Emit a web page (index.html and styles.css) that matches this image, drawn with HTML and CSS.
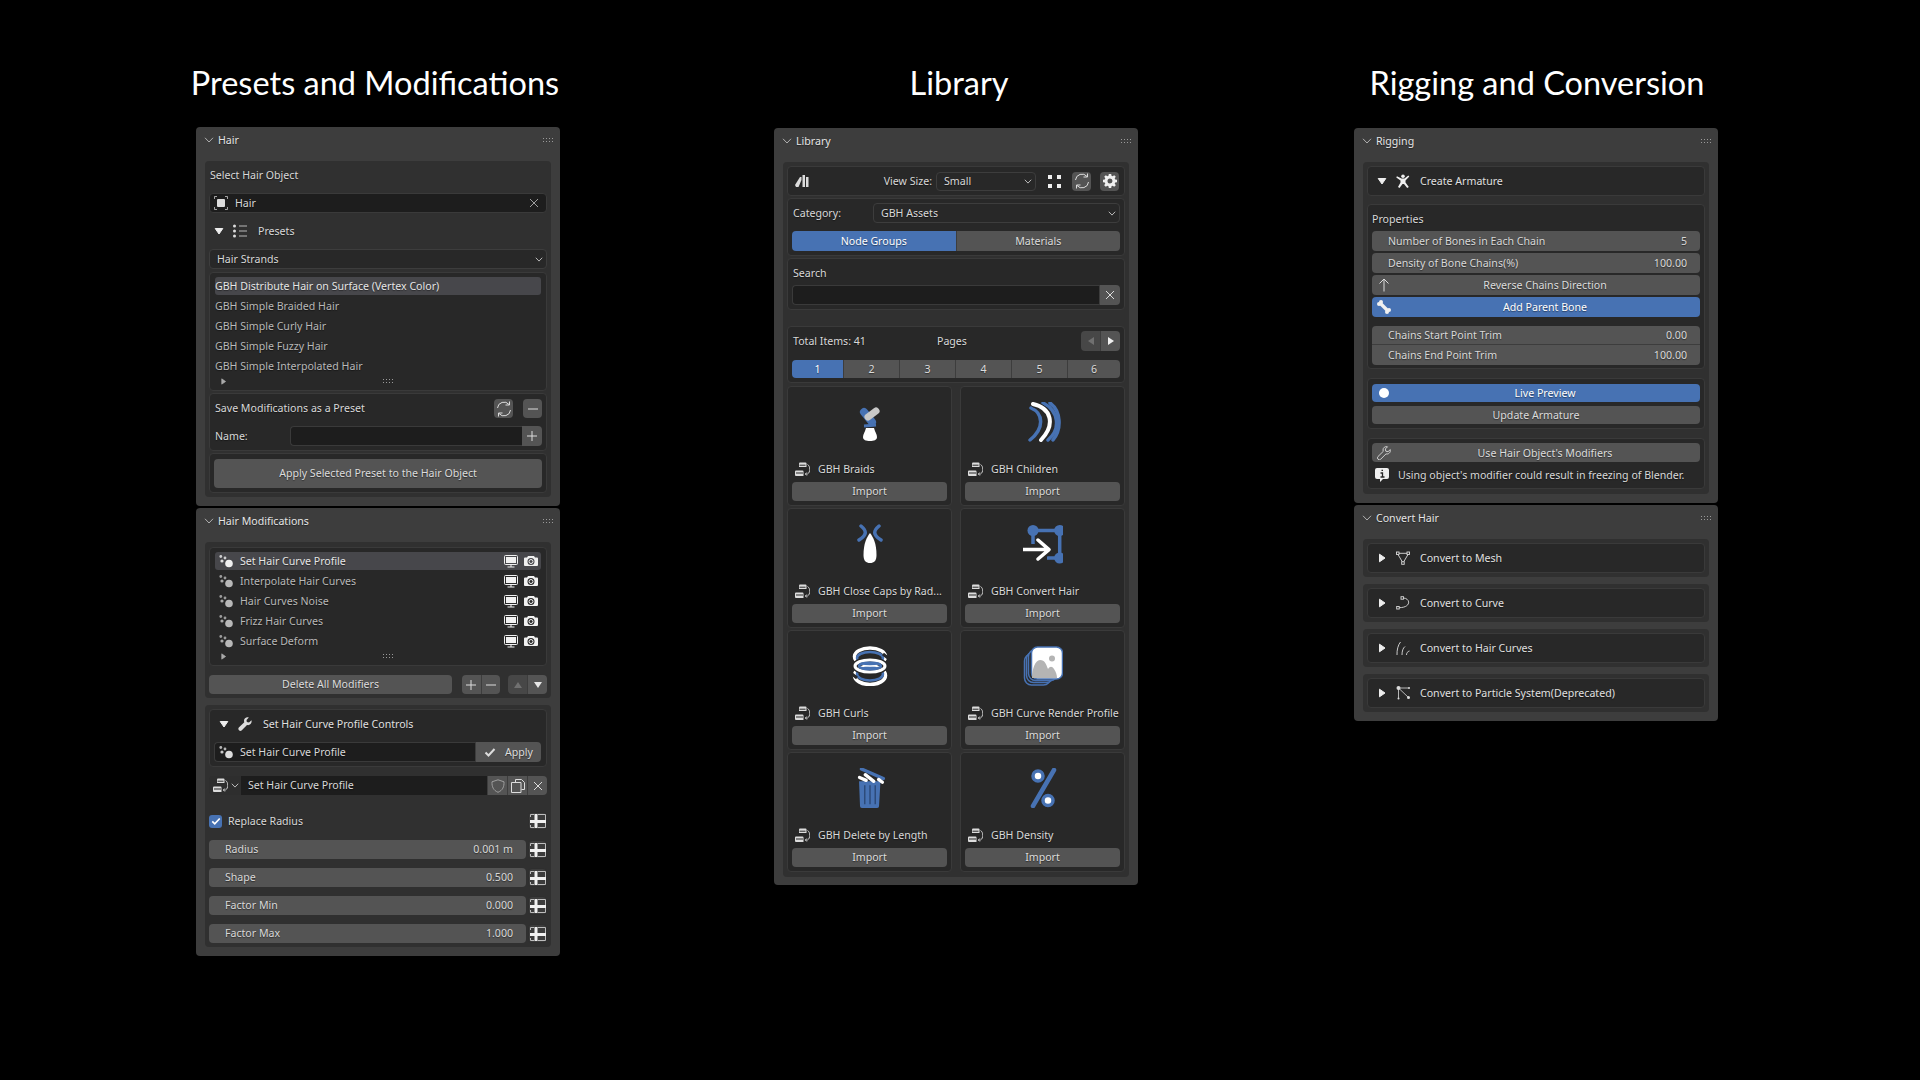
FILE: index.html
```html
<!DOCTYPE html>
<html lang="en">
<head>
	<meta charset="utf-8">
	<title>Hair add-on panels</title>
	<link rel="stylesheet" href="styles.css">
</head>
<body>

<svg class="defs" xmlns="http://www.w3.org/2000/svg">
	<symbol id="chev" viewBox="0 0 10 6"><path d="M1 .8 5 5 9 .8" fill="none" stroke="currentColor"/></symbol>
	<symbol id="tri-down" viewBox="0 0 10 10"><path d="M1.2 2.5h7.6L5 8z" fill="currentColor" stroke="currentColor" stroke-linejoin="round"/></symbol>
	<symbol id="tri-right" viewBox="0 0 10 10"><path d="M2.5 1.2v7.6L8 5z" fill="currentColor" stroke="currentColor" stroke-linejoin="round"/></symbol>
	<symbol id="grip" viewBox="0 0 11 5"><g fill="currentColor"><rect x="0" y="0" width="1" height="1"/><rect x="3" y="0" width="1" height="1"/><rect x="6" y="0" width="1" height="1"/><rect x="9" y="0" width="1" height="1"/><rect x="0" y="3" width="1" height="1"/><rect x="3" y="3" width="1" height="1"/><rect x="6" y="3" width="1" height="1"/><rect x="9" y="3" width="1" height="1"/></g></symbol>
	<symbol id="close" viewBox="0 0 10 10"><path d="M1 1l8 8M9 1 1 9" fill="none" stroke="currentColor"/></symbol>
	<symbol id="object" viewBox="0 0 14 14"><path d="M.5 3V.5H3M11 .5h2.500V3M13.500 11v2.500H11M3 13.500H.5V11" fill="none" stroke="currentColor" opacity=".7"/><rect x="3" y="3" width="8" height="8" rx="1" fill="currentColor"/></symbol>
	<symbol id="list" viewBox="0 0 14 14"><g fill="currentColor"><circle cx="1.500" cy="2" r="1.500"/><circle cx="1.500" cy="7" r="1.500"/><circle cx="1.500" cy="12" r="1.500"/></g><path d="M6 2h8M6 7h8M6 12h8" stroke="currentColor" stroke-width=".8"/></symbol>
	<symbol id="refresh" viewBox="0 0 16 16"><g fill="none" stroke="currentColor"><path d="M1.500 7A6.500 6.500 0 0 1 13 3.500"/><path d="M14.500 9A6.500 6.500 0 0 1 3 12.500"/><path d="M9.500 4H13.500V.5"/><path d="M6.500 12H2.500V15.500"/></g></symbol>
	<symbol id="minus" viewBox="0 0 10 10"><path d="M0 5h10" stroke="currentColor"/></symbol>
	<symbol id="plus" viewBox="0 0 10 10"><path d="M0 5h10M5 0v10" stroke="currentColor"/></symbol>
	<symbol id="mod" viewBox="0 0 14 14"><g fill="currentColor"><circle cx="1.800" cy="2.500" r="1.400" opacity=".8"/><circle cx="6" cy="4" r="1.400" opacity=".8"/><circle cx="3" cy="7" r="1.600" opacity=".9"/><circle cx="10" cy="9.500" r="3.800"/></g></symbol>
	<symbol id="monitor" viewBox="0 0 14 14"><path d="M1.500 1.500h11a1 1 0 0 1 1 1v7a1 1 0 0 1-1 1h-11a1 1 0 0 1-1-1v-7a1 1 0 0 1 1-1z" fill="none" stroke="currentColor"/><rect x="2" y="3" width="10" height="6" fill="currentColor"/><path d="M7 11v2M3.500 13h7" stroke="currentColor"/></symbol>
	<symbol id="camera" viewBox="0 0 14 14"><path fill="currentColor" fill-rule="evenodd" d="M4 2h6l1 1.500h2a1 1 0 0 1 1 1V11a1 1 0 0 1-1 1H1a1 1 0 0 1-1-1V4.500a1 1 0 0 1 1-1h2zM7 4a3.500 3.500 0 1 0 0 7 3.500 3.500 0 0 0 0-7z"/><circle cx="7" cy="7.500" r="2" fill="none" stroke="currentColor"/></symbol>
	<symbol id="wrench" viewBox="0 0 14 14"><path fill="currentColor" d="M13.500 3.200 11 5.500 8.800 5.100 8.500 3 10.800.5C8.500-.3 6 1.300 6 3.800c0 .6.100 1 .3 1.500L.8 10.600a2 2 0 0 0 2.800 2.800L9 8c2.700.8 5.300-1.700 4.500-4.800z"/></symbol>
	<symbol id="wrench-line" viewBox="0 0 14 14"><path fill="none" stroke="currentColor" stroke-width=".9" d="M13.300 3.600 11 5.700 8.800 5.200 8.300 3 10.500.8C8.300 0 5.800 1.700 6 4.100c0 .4.100.8.300 1.200L1 10.500a1.900 1.900 0 0 0 2.700 2.700L9 7.900c2.600.7 4.900-1.600 4.300-4.300z"/></symbol>
	<symbol id="nodes" viewBox="0 0 15 15"><g fill="currentColor"><path d="M5 .5h5.500a1 1 0 0 1 1 1v3.500H4V1.500a1 1 0 0 1 1-1z" /><path d="M1 8.500h6.500a1 1 0 0 1 1 1V14H1a1 1 0 0 1-1-1V9.500a1 1 0 0 1 1-1z"/></g><path d="M4.500 3.200h6M1 11h7" stroke="#282828" stroke-width="1"/><path d="M12.500 2.500c3 1.500 3 8 0 9.500H10.500M11.800 10.500 10.300 12l1.500 1.500" fill="none" stroke="currentColor" stroke-width=".9"/></symbol>
	<symbol id="shield" viewBox="0 0 14 14"><path d="M7 .8 13 2.800c.2 5-1.300 8.500-6 10.500C2.300 11.300.8 7.800 1 2.800z" fill="none" stroke="currentColor"/></symbol>
	<symbol id="copy" viewBox="0 0 14 14"><path d="M4.500 3.500V.5h6l3 3v7h-3M.5 3.500h9.500v10H.5z" fill="none" stroke="currentColor"/></symbol>
	<symbol id="deco" viewBox="0 0 16 16"><path d="M.5 4V1.500H4M8 1.500h7.500V14.500H8M4 14.500H.5V12" fill="none" stroke="#bdbdbd"/><g fill="currentColor"><rect x="4.500" y="1" width="3" height="14"/><rect x="0" y="7" width="16" height="3"/></g></symbol>
	<symbol id="check" viewBox="0 0 12 12"><path d="M1.500 6.500 4.500 9.500 10.500 3" fill="none" stroke="currentColor" stroke-width="2"/></symbol>
	<symbol id="logo" viewBox="0 0 14 14"><g fill="currentColor"><path d="M0 11 5 3h1.500v3L3.500 13H1z"/><rect x="7.500" y="1" width="2.500" height="12"/><rect x="11" y="3" width="2.500" height="10"/></g></symbol>
	<symbol id="dots4" viewBox="0 0 13 13"><g fill="currentColor"><rect width="4" height="4"/><rect x="9" width="4" height="4"/><rect y="9" width="4" height="4"/><rect x="9" y="9" width="4" height="4"/></g></symbol>
	<symbol id="gear" viewBox="0 0 14 14"><path fill="currentColor" fill-rule="evenodd" d="M5.800 0h2.400l.3 1.800 1.100.5L11.200 1.200 12.800 2.800 11.700 4.300l.5 1.200L14 5.800v2.400l-1.800.3-.5 1.100 1.100 1.600-1.600 1.600-1.600-1.100-1.100.5L8.200 14H5.800l-.3-1.800-1.100-.5-1.600 1.100-1.600-1.600 1.100-1.600-.5-1.100L0 8.200V5.800l1.800-.3.5-1.200-1.100-1.500 1.600-1.600 1.600 1.100 1.100-.5zM7 4.500a2.500 2.500 0 1 0 0 5 2.500 2.500 0 0 0 0-5z"/></symbol>
	<symbol id="person" viewBox="0 0 14 14"><g fill="currentColor"><circle cx="7" cy="2.200" r="1.800"/><path d="M.3 3.500.9 2.200 5.500 4.400h3l3.800-3L13.300 2.500 9.500 6.500 9.500 8.500 12.800 13 11.200 14 8 10H6.500L3.500 14 2 13l2.500-4.500V6.500z"/></g></symbol>
	<symbol id="arrow-up" viewBox="0 0 12 14"><path d="M6 13.500V1M1.500 5.500 6 1l4.500 4.500" fill="none" stroke="currentColor"/></symbol>
	<symbol id="bone" viewBox="0 0 14 14"><path d="M3 3 11 11" stroke="currentColor" stroke-width="3.400"/><g fill="currentColor"><circle cx="2" cy="4" r="2"/><circle cx="4" cy="2" r="2"/><circle cx="10" cy="12" r="2"/><circle cx="12" cy="10" r="2"/></g></symbol>
	<symbol id="info" viewBox="0 0 14 14"><path fill="currentColor" d="M2 0h10a2 2 0 0 1 2 2v7a2 2 0 0 1-2 2H8l-3 3v-3H2a2 2 0 0 1-2-2V2a2 2 0 0 1 2-2z"/><path d="M5.500 5H7.500V8.500M5.500 9H9.500M6.500 2.300h1.500" fill="none" stroke="#282828" stroke-width="1.300"/></symbol>
	<symbol id="mesh" viewBox="0 0 14 14"><g fill="none" stroke="currentColor" stroke-width=".9"><rect x=".5" y="1" width="2.500" height="2.500"/><rect x="11" y="1" width="2.500" height="2.500"/><rect x="5.700" y="10.800" width="2.500" height="2.500"/><path d="M3 2.300h8M2 3.500 6.300 10.800M12 3.500 7.700 10.800"/></g></symbol>
	<symbol id="curve" viewBox="0 0 14 14"><g fill="none" stroke="currentColor" stroke-width=".9"><rect x="5" y=".7" width="2.500" height="2.500"/><rect x=".7" y="10.500" width="2.500" height="2.500"/><path d="M7.500 2c7 .5 8 9.500-4.300 9.700"/></g></symbol>
	<symbol id="hair" viewBox="0 0 14 14"><path d="M1 14C.8 9 2 4 4.500 1M6 14c0-4 1-7 3-8.500M10.500 14c0-2 1-3.500 3-4" fill="none" stroke="currentColor" stroke-width=".9"/></symbol>
	<symbol id="particle" viewBox="0 0 14 14"><g fill="currentColor"><circle cx="2.500" cy="2" r="2"/><circle cx="13" cy="2" r="1"/><circle cx="12.500" cy="11.500" r="1.500"/><circle cx="2.500" cy="12.500" r="1"/></g><path d="M2.500 2h10M2.500 2l10 9.500M2.500 2v10" stroke="currentColor" stroke-width=".8"/></symbol>

	<symbol id="big-braids" viewBox="0 0 40 40"><path d="M14 10l8 10" stroke="#4772b3" stroke-width="8" stroke-linecap="round"/><path d="M14 24l12-1" stroke="#4772b3" stroke-width="3"/><path d="M18 15 26 9" stroke="#c8c8c8" stroke-width="7" stroke-linecap="round"/><path d="M16 26h8c1 4 3 6 3 9 0 3-3 4-7 4s-7-1-7-4c0-3 2-5 3-9z" fill="#fff"/></symbol>
	<symbol id="big-children" viewBox="0 0 40 40"><g fill="none" stroke="#4772b3" stroke-width="3.500" stroke-linecap="round"><path d="M8 6c12 5 14 20-1 32"/><path d="M20 1c16 8 18 26 5 37"/><path d="M27 1c11 8 12 26 3 37"/></g><path d="M10 2c18 4 23 20 8 36" fill="none" stroke="#282828" stroke-width="6"/><path d="M10 2c18 4 23 20 8 36" fill="none" stroke="#fff" stroke-width="4" stroke-linecap="round"/></symbol>
	<symbol id="big-caps" viewBox="0 0 40 40"><path d="M20 9c3 4 6.500 10 6.500 22 0 6-2.500 8-6.500 8s-6.500-2-6.500-8C13.500 19 17 13 20 9z" fill="#fff"/><path d="M11 2c6 5 6 9-2 14M29 2c-6 5-6 9 2 14" fill="none" stroke="#4772b3" stroke-width="3.500" stroke-linecap="round"/></symbol>
	<symbol id="big-convert" viewBox="0 0 40 40"><path d="M10 20V6.500h26.700V34H24" fill="none" stroke="#4772b3" stroke-width="3.500"/><g fill="#4772b3"><circle cx="10" cy="6.500" r="5.500"/><circle cx="36.700" cy="6.500" r="5.500"/><circle cx="36.700" cy="34" r="5.500"/></g><path d="M-1 25.600H25M15 16l11 9.600L15 35" fill="none" stroke="#282828" stroke-width="8"/><path d="M-1 25.600H25M15 16l11 9.600L15 35" fill="none" stroke="#fff" stroke-width="3.500" stroke-linecap="round" stroke-linejoin="round"/></symbol>
	<symbol id="big-curls" viewBox="0 0 40 40"><g fill="none"><ellipse cx="20" cy="29.500" rx="15.500" ry="9" stroke="#fff" stroke-width="3.500"/><ellipse cx="20" cy="28" rx="13" ry="6.500" stroke="#4772b3" stroke-width="2.500"/><ellipse cx="20" cy="10.500" rx="15.500" ry="8.500" stroke="#fff" stroke-width="3.500"/><ellipse cx="20" cy="12" rx="13" ry="6" stroke="#4772b3" stroke-width="2.500"/><ellipse cx="20" cy="20" rx="15.500" ry="6.500" stroke="#282828" stroke-width="5"/><ellipse cx="20" cy="20" rx="15" ry="6" stroke="#fff" stroke-width="3"/><ellipse cx="20" cy="20" rx="11" ry="3.200" stroke="#4772b3" stroke-width="2.500"/></g><path d="M33 8l5 4M2 28l5 4" stroke="#282828" stroke-width="3"/></symbol>
	<symbol id="big-profile" viewBox="0 0 40 40"><g fill="#282828" stroke="#4772b3" stroke-width="1.500"><rect x="1.500" y="8" width="26" height="31" rx="7"/><rect x="3.500" y="6" width="27" height="30.500" rx="7"/><rect x="5.500" y="3.500" width="29" height="31" rx="7"/></g><rect x="8.500" y="1" width="31" height="32" rx="6" fill="#fff" stroke="#4772b3" stroke-width="1.500"/><path d="M9 32c0-8 3-18 8-18s6 4 8 9c2-3 4-3 6 0 2 3 3 6 3 9z" fill="#b4b4b4"/><circle cx="29" cy="12.500" r="3" fill="#b4b4b4"/></symbol>
	<symbol id="big-delete" viewBox="0 0 40 42"><path d="M8.500 14H31l-1.500 26a2 2 0 0 1-2 2h-16a2 2 0 0 1-2-2z" fill="#4772b3"/><path d="M14.500 18v20M20 18v20M25.500 18v20" stroke="#2c4a78" stroke-width="1.500"/><path d="M11 1 34 11" stroke="#4772b3" stroke-width="3.500" stroke-linecap="round"/><g fill="none" stroke="#fff" stroke-width="3.500" stroke-linecap="round"><path d="M9 10l7 3"/><path d="M15 7l9 7"/><path d="M29 12l4 3"/></g></symbol>
	<symbol id="big-percent" viewBox="0 0 40 40"><path d="M31 2 10 38" stroke="#4772b3" stroke-width="4.500" stroke-linecap="round"/><circle cx="15" cy="8" r="5" fill="#fff" stroke="#4772b3" stroke-width="3.500"/><circle cx="25" cy="32.500" r="5" fill="#fff" stroke="#4772b3" stroke-width="3.500"/></symbol>
</svg>

<div class="board">

	<div class="col">
		<h1 class="col-title title-left">Presets and Modifications</h1>

		<section class="panel">
			<div class="panel-head">
				<svg class="i-chev"><use href="#chev"/></svg>
				<span class="panel-name">Hair</span>
				<svg class="i-grip"><use href="#grip"/></svg>
			</div>
			<div class="inner">
				<div class="line label-line">Select Hair Object</div>
				<div class="field mt8 hair-field">
					<svg class="i14 lite"><use href="#object"/></svg>
					<span class="hair-name">Hair</span>
					<svg class="i-x dim"><use href="#close"/></svg>
				</div>
				<div class="line mt8 presets-line">
					<svg class="i-tri"><use href="#tri-down"/></svg>
					<svg class="i14 lite ml9"><use href="#list"/></svg>
					<span class="ml11">Presets</span>
				</div>
				<div class="select mt8"><span>Hair Strands</span><svg class="i-sel"><use href="#chev"/></svg></div>

				<div class="box list mt3">
					<div class="list-row on">GBH Distribute Hair on Surface (Vertex Color)</div>
					<div class="list-row">GBH Simple Braided Hair</div>
					<div class="list-row">GBH Simple Curly Hair</div>
					<div class="list-row">GBH Simple Fuzzy Hair</div>
					<div class="list-row">GBH Simple Interpolated Hair</div>
					<div class="list-foot">
						<svg class="i-foot"><use href="#tri-right"/></svg>
						<svg class="i-grip foot-grip"><use href="#grip"/></svg>
					</div>
				</div>

				<div class="box save mt2">
					<div class="save-line">
						<span class="grow">Save Modifications as a Preset</span>
						<span class="btn square"><svg class="i16 lite"><use href="#refresh"/></svg></span>
						<span class="btn square ml10"><svg class="i-pm lite"><use href="#minus"/></svg></span>
					</div>
					<div class="name-line">
						<span class="name-label">Name:</span>
						<span class="field grow joined-right"></span>
						<span class="btn plus-end"><svg class="i-pm lite"><use href="#plus"/></svg></span>
					</div>
				</div>

				<div class="box apply-box mt2">
					<div class="btn big-btn">Apply Selected Preset to the Hair Object</div>
				</div>
			</div>
		</section>

		<section class="panel">
			<div class="panel-head">
				<svg class="i-chev"><use href="#chev"/></svg>
				<span class="panel-name">Hair Modifications</span>
				<svg class="i-grip"><use href="#grip"/></svg>
			</div>
			<div class="inner">
				<div class="box list mt1">
					<div class="list-row mod-row on">
						<svg class="i14 lite"><use href="#mod"/></svg><span class="grow mod-name">Set Hair Curve Profile</span>
						<svg class="i14 white"><use href="#monitor"/></svg><svg class="i14 white cam"><use href="#camera"/></svg>
					</div>
					<div class="list-row mod-row">
						<svg class="i14"><use href="#mod"/></svg><span class="grow mod-name">Interpolate Hair Curves</span>
						<svg class="i14 white"><use href="#monitor"/></svg><svg class="i14 white cam"><use href="#camera"/></svg>
					</div>
					<div class="list-row mod-row">
						<svg class="i14"><use href="#mod"/></svg><span class="grow mod-name">Hair Curves Noise</span>
						<svg class="i14 white"><use href="#monitor"/></svg><svg class="i14 white cam"><use href="#camera"/></svg>
					</div>
					<div class="list-row mod-row">
						<svg class="i14"><use href="#mod"/></svg><span class="grow mod-name">Frizz Hair Curves</span>
						<svg class="i14 white"><use href="#monitor"/></svg><svg class="i14 white cam"><use href="#camera"/></svg>
					</div>
					<div class="list-row mod-row">
						<svg class="i14"><use href="#mod"/></svg><span class="grow mod-name">Surface Deform</span>
						<svg class="i14 white"><use href="#monitor"/></svg><svg class="i14 white cam"><use href="#camera"/></svg>
					</div>
					<div class="list-foot">
						<svg class="i-foot"><use href="#tri-right"/></svg>
						<svg class="i-grip foot-grip"><use href="#grip"/></svg>
					</div>
				</div>
				<div class="mod-actions">
					<div class="btn delete-btn">Delete All Modifiers</div>
					<div class="joined plus-minus">
						<span class="btn"><svg class="i-pm lite"><use href="#plus"/></svg></span>
						<span class="btn"><svg class="i-pm lite"><use href="#minus"/></svg></span>
					</div>
					<div class="joined up-down">
						<span class="btn faded"><i class="tri-up"></i></span>
						<span class="btn"><i class="tri-down"></i></span>
					</div>
				</div>
			</div>
			<div class="inner mt7">
				<div class="box controls">
					<div class="controls-head">
						<svg class="i-tri"><use href="#tri-down"/></svg>
						<svg class="i14 lite ml9"><use href="#wrench"/></svg>
						<span class="ml11">Set Hair Curve Profile Controls</span>
					</div>
					<div class="joined apply-line">
						<span class="field grow joined-right mod-field"><svg class="i14 lite"><use href="#mod"/></svg><span class="mod-name">Set Hair Curve Profile</span></span>
						<span class="btn apply-btn"><svg class="i-check"><use href="#check"/></svg>Apply</span>
					</div>
				</div>

				<div class="joined node-line">
					<span class="select node-pick"><svg class="i15 lite"><use href="#nodes"/></svg><svg class="i-sel"><use href="#chev"/></svg></span>
					<span class="field grow node-name">Set Hair Curve Profile</span>
					<span class="btn node-btn"><svg class="i14 dim"><use href="#shield"/></svg></span>
					<span class="btn node-btn"><svg class="i14 lite"><use href="#copy"/></svg></span>
					<span class="btn node-btn"><svg class="i-x lite"><use href="#close"/></svg></span>
				</div>

				<div class="prop check-line">
					<span class="checkbox"><svg class="i-tick"><use href="#check"/></svg></span>
					<span class="grow check-label">Replace Radius</span>
					<span class="btn deco"><svg class="i16 white"><use href="#deco"/></svg></span>
				</div>
				<div class="prop mt10">
					<div class="num"><span>Radius</span><span>0.001 m</span></div>
					<span class="btn deco"><svg class="i16 white"><use href="#deco"/></svg></span>
				</div>
				<div class="prop mt9">
					<div class="num"><span>Shape</span><span>0.500</span></div>
					<span class="btn deco"><svg class="i16 white"><use href="#deco"/></svg></span>
				</div>
				<div class="prop mt9">
					<div class="num"><span>Factor Min</span><span>0.000</span></div>
					<span class="btn deco"><svg class="i16 white"><use href="#deco"/></svg></span>
				</div>
				<div class="prop mt9">
					<div class="num"><span>Factor Max</span><span>1.000</span></div>
					<span class="btn deco"><svg class="i16 white"><use href="#deco"/></svg></span>
				</div>
			</div>
		</section>
	</div>

	<div class="col col-library">
		<h1 class="col-title title-right">Library</h1>

		<section class="panel panel-low">
			<div class="panel-head">
				<svg class="i-chev"><use href="#chev"/></svg>
				<span class="panel-name">Library</span>
				<svg class="i-grip"><use href="#grip"/></svg>
			</div>
			<div class="inner inner-library">
				<div class="box view-box">
					<svg class="i14 lite"><use href="#logo"/></svg>
					<span class="view-label">View Size:</span>
					<span class="select view-select"><span>Small</span><svg class="i-sel"><use href="#chev"/></svg></span>
					<svg class="i13 white"><use href="#dots4"/></svg>
					<span class="btn square ml11"><svg class="i16 lite"><use href="#refresh"/></svg></span>
					<span class="btn square ml9"><svg class="i14 white"><use href="#gear"/></svg></span>
				</div>

				<div class="box pad mt2">
					<div class="cat-line">
						<span class="cat-label">Category:</span>
						<span class="select grow"><span>GBH Assets</span><svg class="i-sel"><use href="#chev"/></svg></span>
					</div>
					<div class="joined tabs mt8">
						<span class="btn blue">Node Groups</span>
						<span class="btn">Materials</span>
					</div>
				</div>

				<div class="box pad mt2">
					<div class="line search-label">Search</div>
					<div class="joined search-line">
						<span class="field grow joined-right"></span>
						<span class="btn x-end"><svg class="i-x lite"><use href="#close"/></svg></span>
					</div>
				</div>

				<div class="box pad mt16">
					<div class="pages-head">
						<span class="total">Total Items: 41</span>
						<span class="grow">Pages</span>
						<div class="joined page-arrows">
							<span class="btn faded"><i class="tri-left"></i></span>
							<span class="btn"><i class="tri-right"></i></span>
						</div>
					</div>
					<div class="pages mt9">
						<span class="btn blue">1</span>
						<span class="btn">2</span>
						<span class="btn">3</span>
						<span class="btn">4</span>
						<span class="btn">5</span>
						<span class="btn">6</span>
					</div>
				</div>

				<div class="cards mt3">
					<div class="box card">
						<div class="card-art"><svg class="i-big"><use href="#big-braids"/></svg></div>
						<div class="card-name"><svg class="i15 lite"><use href="#nodes"/></svg><span>GBH Braids</span></div>
						<div class="btn import">Import</div>
					</div>
					<div class="box card">
						<div class="card-art"><svg class="i-big"><use href="#big-children"/></svg></div>
						<div class="card-name"><svg class="i15 lite"><use href="#nodes"/></svg><span>GBH Children</span></div>
						<div class="btn import">Import</div>
					</div>
					<div class="box card">
						<div class="card-art"><svg class="i-big"><use href="#big-caps"/></svg></div>
						<div class="card-name"><svg class="i15 lite"><use href="#nodes"/></svg><span>GBH Close Caps by Rad...</span></div>
						<div class="btn import">Import</div>
					</div>
					<div class="box card">
						<div class="card-art"><svg class="i-big"><use href="#big-convert"/></svg></div>
						<div class="card-name"><svg class="i15 lite"><use href="#nodes"/></svg><span>GBH Convert Hair</span></div>
						<div class="btn import">Import</div>
					</div>
					<div class="box card">
						<div class="card-art"><svg class="i-big"><use href="#big-curls"/></svg></div>
						<div class="card-name"><svg class="i15 lite"><use href="#nodes"/></svg><span>GBH Curls</span></div>
						<div class="btn import">Import</div>
					</div>
					<div class="box card">
						<div class="card-art"><svg class="i-big"><use href="#big-profile"/></svg></div>
						<div class="card-name"><svg class="i15 lite"><use href="#nodes"/></svg><span>GBH Curve Render Profile</span></div>
						<div class="btn import">Import</div>
					</div>
					<div class="box card">
						<div class="card-art"><svg class="i-big"><use href="#big-delete"/></svg></div>
						<div class="card-name"><svg class="i15 lite"><use href="#nodes"/></svg><span>GBH Delete by Length</span></div>
						<div class="btn import">Import</div>
					</div>
					<div class="box card">
						<div class="card-art"><svg class="i-big"><use href="#big-percent"/></svg></div>
						<div class="card-name"><svg class="i15 lite"><use href="#nodes"/></svg><span>GBH Density</span></div>
						<div class="btn import">Import</div>
					</div>
				</div>
			</div>
		</section>
	</div>

	<div class="col col-rigging">
		<h1 class="col-title title-rig">Rigging and Conversion</h1>

		<section class="panel panel-low">
			<div class="panel-head">
				<svg class="i-chev"><use href="#chev"/></svg>
				<span class="panel-name">Rigging</span>
				<svg class="i-grip"><use href="#grip"/></svg>
			</div>
			<div class="inner inner-rig">
				<div class="box sub-head">
					<svg class="i-tri"><use href="#tri-down"/></svg>
					<svg class="i14 white"><use href="#person"/></svg>
					<span>Create Armature</span>
				</div>

				<div class="box rig-props mt8">
					<div class="line">Properties</div>
					<div class="rig-stack">
						<div class="num"><span>Number of Bones in Each Chain</span><span>5</span></div>
						<div class="num"><span>Density of Bone Chains(%)</span><span>100.00</span></div>
						<div class="btn wide-btn"><svg class="i-lead lite"><use href="#arrow-up"/></svg>Reverse Chains Direction</div>
						<div class="btn wide-btn blue"><svg class="i-lead white"><use href="#bone"/></svg>Add Parent Bone</div>
					</div>
					<div class="trim mt9">
						<div class="num"><span>Chains Start Point Trim</span><span>0.00</span></div>
						<div class="num"><span>Chains End Point Trim</span><span>100.00</span></div>
					</div>
				</div>

				<div class="box rig-actions mt9">
					<div class="btn wide-btn blue"><i class="dot"></i>Live Preview</div>
					<div class="btn">Update Armature</div>
				</div>

				<div class="box rig-note mt9">
					<div class="btn wide-btn"><svg class="i-lead lite"><use href="#wrench-line"/></svg>Use Hair Object's Modifiers</div>
					<div class="note"><svg class="i14 white"><use href="#info"/></svg><span>Using object's modifier could result in freezing of Blender.</span></div>
				</div>
			</div>
		</section>

		<section class="panel">
			<div class="panel-head">
				<svg class="i-chev"><use href="#chev"/></svg>
				<span class="panel-name">Convert Hair</span>
				<svg class="i-grip"><use href="#grip"/></svg>
			</div>
			<div class="inner inner-row">
				<div class="box sub-head">
					<svg class="i-tri"><use href="#tri-right"/></svg>
					<svg class="i14 lite"><use href="#mesh"/></svg>
					<span>Convert to Mesh</span>
				</div>
			</div>
			<div class="inner inner-row mt7">
				<div class="box sub-head">
					<svg class="i-tri"><use href="#tri-right"/></svg>
					<svg class="i14 lite"><use href="#curve"/></svg>
					<span>Convert to Curve</span>
				</div>
			</div>
			<div class="inner inner-row mt7">
				<div class="box sub-head">
					<svg class="i-tri"><use href="#tri-right"/></svg>
					<svg class="i14 lite"><use href="#hair"/></svg>
					<span>Convert to Hair Curves</span>
				</div>
			</div>
			<div class="inner inner-row mt7">
				<div class="box sub-head">
					<svg class="i-tri"><use href="#tri-right"/></svg>
					<svg class="i14 lite"><use href="#particle"/></svg>
					<span>Convert to Particle System(Deprecated)</span>
				</div>
			</div>
		</section>
	</div>

</div>

</body>
</html>
```

FILE: styles.css
```css
* {
	box-sizing: border-box;
}
body {
	margin: 0;
	background: #000;
	color: #d8d8d8;
	font: 10.6px "Noto Sans", "Liberation Sans", sans-serif;
	text-shadow: 0 1px 1px rgba(0, 0, 0, .45);
}
svg {
	display: block;
	flex: none;
}
i {
	display: block;
}
.defs {
	display: none;
}

/* page columns */
.board {
	display: flex;
	height: 1080px;
	padding-left: 196px;
	overflow: hidden;
}
.col {
	width: 364px;
}
.col-library {
	margin-left: 214px;
}
.col-rigging {
	margin-left: 216px;
}
.col-title {
	height: 127px;
	margin: 0 -20px;
	padding-top: 62px;
	color: #fff;
	font: 400 32.5px/42px Lato, sans-serif;
	text-align: center;
	text-shadow: none;
	white-space: nowrap;
}
.title-left {
	margin-right: -14px;
}
.title-right {
	margin-left: -14px;
}
.title-rig {
	margin-left: -18px;
}

/* blender panels */
.panel {
	padding: 0 9px 9px;
	background: #3d3d3d;
	border-radius: 4px;
}
.panel + .panel {
	margin-top: 2px;
}
.panel-low {
	margin-top: 1px;
}
.panel-head {
	display: flex;
	align-items: center;
	height: 34px;
	padding-bottom: 8px;
	margin: 0 -3px 0 -1px;
}
.panel-name {
	flex: 1;
	margin-left: 4px;
	color: #e6e6e6;
}
.i-chev {
	width: 10px;
	height: 6px;
	color: #b0b0b0;
}
.i-grip {
	width: 11px;
	height: 5px;
	color: #9a9a9a;
}
.inner {
	padding: 4px;
	background: #303030;
	border-radius: 4px;
}
.inner-row {
	height: 38px;
}
.box {
	background: #282828;
	border: 1px solid #3a3a3a;
	border-radius: 4px;
}
.pad {
	padding: 4px;
}

/* spacing */
.mt1 { margin-top: 1px; }
.mt2 { margin-top: 2px; }
.mt3 { margin-top: 3px; }
.mt7 { margin-top: 7px; }
.mt8 { margin-top: 8px; }
.mt9 { margin-top: 9px; }
.mt10 { margin-top: 10px; }
.mt16 { margin-top: 16px; }
.ml9 { margin-left: 9px; }
.ml10 { margin-left: 10px; }
.ml11 { margin-left: 11px; }
.grow {
	flex: 1;
	min-width: 0;
}

/* icon sizes */
.i13 { width: 13px; height: 13px; margin-left: 12px; }
.i14 { width: 14px; height: 14px; }
.i15 { width: 15px; height: 15px; }
.i16 { width: 16px; height: 16px; }
.i-big { width: 40px; height: 40px; overflow: visible; }
.i-tri { width: 10px; height: 10px; color: #eee; }
.i-x { width: 10px; height: 10px; }
.i-pm { width: 10px; height: 10px; }
.i-sel { width: 8px; height: 5px; color: #e0e0e0; }
.i-foot { width: 7px; height: 7px; color: #aaa; }
.lite { color: #dcdcdc; }
.white { color: #f0f0f0; }
.dim { color: #9e9e9e; }
.cam { margin-left: 6px; }

/* controls */
.line {
	display: flex;
	align-items: center;
	height: 20px;
}
.label-line {
	padding-left: 1px;
}
.field {
	display: flex;
	align-items: center;
	height: 20px;
	background: #1d1d1d;
	border: 1px solid #3a3a3a;
	border-radius: 4px;
}
.select {
	display: flex;
	align-items: center;
	justify-content: space-between;
	height: 20px;
	padding: 0 3px 0 7px;
	background: #282828;
	border: 1px solid #3d3d3d;
	border-radius: 4px;
}
.btn {
	display: flex;
	align-items: center;
	justify-content: center;
	height: 19px;
	background: #545454;
	border-radius: 4px;
	color: #dcdcdc;
}
.blue {
	background: #4772b3;
	color: #fff;
}
.square {
	width: 19px;
}
.faded {
	background: #474747;
}
.joined {
	display: flex;
}
.joined > .btn {
	border-radius: 0;
	border-left: 1px solid #3d3d3d;
}
.joined > .btn:first-child {
	border-left: 0;
	border-radius: 4px 0 0 4px;
}
.joined > .btn:last-child {
	border-radius: 0 4px 4px 0;
}
.joined-right {
	border-right: 0;
	border-radius: 4px 0 0 4px;
}
.hair-field {
	padding: 0 7px 0 4px;
}
.hair-name {
	flex: 1;
	margin-left: 7px;
}
.presets-line {
	padding-left: 5px;
}

/* list widgets */
.list {
	height: 119px;
	padding: 4px 5px 0;
}
.list-row {
	display: flex;
	align-items: center;
	height: 18px;
	margin-bottom: 2px;
	border-radius: 3px;
	color: #b8b8b8;
}
.list-row.on {
	background: #47474b;
	color: #e6e6e6;
}
.mod-row {
	padding: 0 3px 0 4px;
}
.mod-row .i14:first-child {
	color: #b8b8b8;
}
.mod-row.on .i14:first-child {
	color: #f0f0f0;
}
.mod-name {
	margin-left: 7px;
}
.list-foot {
	position: relative;
	display: flex;
	align-items: center;
	justify-content: center;
	height: 12px;
	margin-top: -2px;
}
.list-foot .i-foot {
	position: absolute;
	left: 5px;
}
.foot-grip {
	margin-left: 21px;
}

/* preset saving */
.save {
	height: 58px;
	padding: 5px 4px 0 5px;
}
.save-line {
	display: flex;
	align-items: center;
	height: 19px;
}
.save-line > .grow {
	padding-bottom: 1px;
}
.name-line {
	display: flex;
	align-items: center;
	height: 20px;
	margin-top: 8px;
}
.name-label {
	width: 75px;
}
.plus-end {
	width: 20px;
	height: 20px;
	border-radius: 0 4px 4px 0;
}
.apply-box {
	height: 40px;
	padding: 5px 4px;
}
.big-btn {
	height: 29px;
	padding-bottom: 1px;
}

/* modifier actions */
.mod-actions {
	display: flex;
	height: 19px;
	margin-top: 9px;
}
.delete-btn {
	width: 243px;
	padding-bottom: 1px;
}
.plus-minus {
	width: 38px;
	margin-left: 10px;
}
.plus-minus .btn,
.up-down .btn {
	flex: 1;
}
.up-down {
	width: 39px;
	margin-left: 8px;
}
.tri-up,
.tri-down {
	width: 0;
	height: 0;
	border-left: 4.500px solid transparent;
	border-right: 4.500px solid transparent;
}
.tri-up {
	border-bottom: 6px solid #707070;
}
.tri-down {
	border-top: 6px solid #e6e6e6;
}
.tri-left,
.tri-right {
	width: 0;
	height: 0;
	border-top: 4.500px solid transparent;
	border-bottom: 4.500px solid transparent;
}
.tri-left {
	border-right: 6px solid #707070;
}
.tri-right {
	border-left: 6px solid #f0f0f0;
}

/* modifier controls */
.controls {
	height: 58px;
	padding: 0 5px 0 4px;
}
.controls-head {
	display: flex;
	align-items: center;
	height: 32px;
	padding: 0 0 5px 5px;
	color: #e0e0e0;
}
.apply-line {
	height: 20px;
}
.mod-field {
	padding-left: 4px;
}
.apply-btn {
	width: 66px;
	height: 20px;
	gap: 9px;
}
.i-check {
	width: 12px;
	height: 12px;
}
.node-line {
	height: 19px;
	margin-top: 9px;
}
.node-pick {
	width: 32px;
	height: 19px;
	padding: 0 2px 0 4px;
	border: 0;
	border-radius: 4px 0 0 4px;
	background: #2e2e2e;
}
.node-name {
	height: 19px;
	padding: 0 0 1px 7px;
	border: 0;
	border-radius: 0;
}
.node-btn {
	width: 20px;
	flex: none;
}
.prop {
	display: flex;
	gap: 2px;
}
.check-line {
	align-items: center;
	height: 18px;
	margin-top: 17px;
}
.checkbox {
	display: flex;
	align-items: center;
	justify-content: center;
	width: 13px;
	height: 13px;
	background: #4772b3;
	border-radius: 3px;
}
.i-tick {
	width: 10px;
	height: 10px;
	color: #fff;
}
.check-label {
	margin-left: 4px;
}
.deco {
	width: 19px;
	height: 19px;
	flex: none;
	border: 1px solid #2e2e2e;
	border-radius: 4px;
	background: #3c3c3c;
}
.check-line .deco {
	height: 18px;
}
.num {
	display: flex;
	flex: 1;
	align-items: center;
	justify-content: space-between;
	height: 19px;
	padding: 0 13px 1px 16px;
	background: #545454;
	border-radius: 4px;
	color: #d8d8d8;
}

/* library */
.inner-library {
	padding-bottom: 5px;
}
.panel-low:has(.inner-library) {
	padding-bottom: 8px;
}
.view-box {
	display: flex;
	align-items: center;
	height: 30px;
	padding: 0 5px 0 7px;
}
.view-label {
	width: 123px;
	margin-right: 4px;
	text-align: right;
}
.view-select {
	width: 100px;
	height: 19px;
}
.cat-line {
	display: flex;
	align-items: center;
}
.cat-label {
	width: 81px;
	padding-left: 1px;
}
.tabs {
	height: 20px;
}
.tabs .btn {
	flex: 1;
	height: 20px;
}
.search-label {
	padding-left: 1px;
	margin-bottom: 2px;
}
.search-line {
	height: 20px;
}
.x-end {
	width: 21px;
	height: 20px;
}
.pages-head {
	display: flex;
	align-items: center;
	height: 20px;
	padding-left: 1px;
}
.total {
	width: 144px;
}
.page-arrows {
	width: 39px;
}
.page-arrows .btn {
	flex: 1;
	height: 20px;
}
.pages {
	display: grid;
	grid-template-columns: 51px repeat(4, 56px) 1fr;
}
.pages .btn {
	height: 18px;
	border-radius: 0;
	border-left: 1px solid #3d3d3d;
}
.pages .btn:first-child {
	border-left: 0;
	border-radius: 4px 0 0 4px;
}
.pages .btn:last-child {
	border-radius: 0 4px 4px 0;
}
.cards {
	display: grid;
	grid-template-columns: 165px 165px;
	grid-auto-rows: 120px;
	gap: 2px 8px;
}
.card {
	display: flex;
	flex-direction: column;
	padding: 4px;
}
.card-art {
	display: flex;
	flex: 1;
	align-items: center;
	justify-content: center;
	padding-bottom: 6px;
}
.card-name {
	display: flex;
	align-items: center;
	height: 20px;
	margin-bottom: 3px;
	padding-left: 3px;
	white-space: nowrap;
}
.card-name span {
	margin-left: 8px;
}
.import {
	flex: none;
	padding-bottom: 2px;
}

/* rigging */
.sub-head {
	display: flex;
	align-items: center;
	height: 30px;
	padding-left: 9px;
	color: #e0e0e0;
}
.sub-head .i14 {
	margin-left: 9px;
}
.sub-head span {
	margin-left: 10px;
}
.inner-rig {
	padding-bottom: 5px;
}
.rig-props {
	height: 165px;
	padding: 4px 4px 0;
}
.rig-stack {
	display: flex;
	flex-direction: column;
	gap: 2px;
	margin-top: 2px;
}
.rig-stack .num,
.rig-stack .btn,
.trim .num {
	flex: none;
	height: 20px;
	padding-bottom: 0;
}
.wide-btn {
	position: relative;
	padding-left: 18px;
}
.i-lead {
	position: absolute;
	left: 5px;
	top: 3px;
	width: 14px;
	height: 14px;
}
.trim .num:first-child {
	height: 19px;
	border-radius: 4px 4px 0 0;
	border-bottom: 1px solid #3d3d3d;
}
.trim .num:last-child {
	border-radius: 0 0 4px 4px;
}
.rig-actions {
	display: flex;
	flex-direction: column;
	gap: 4px;
	height: 51px;
	padding: 5px 4px 0;
}
.rig-actions .btn {
	height: 18px;
}
.dot {
	position: absolute;
	left: 7px;
	top: 4px;
	width: 10px;
	height: 10px;
	background: #fff;
	border-radius: 50%;
}
.rig-note {
	height: 51px;
	padding: 4px 4px 0;
}
.note {
	display: flex;
	align-items: center;
	height: 20px;
	margin-top: 3px;
	padding-left: 3px;
}
.note span {
	margin-left: 9px;
}
```
